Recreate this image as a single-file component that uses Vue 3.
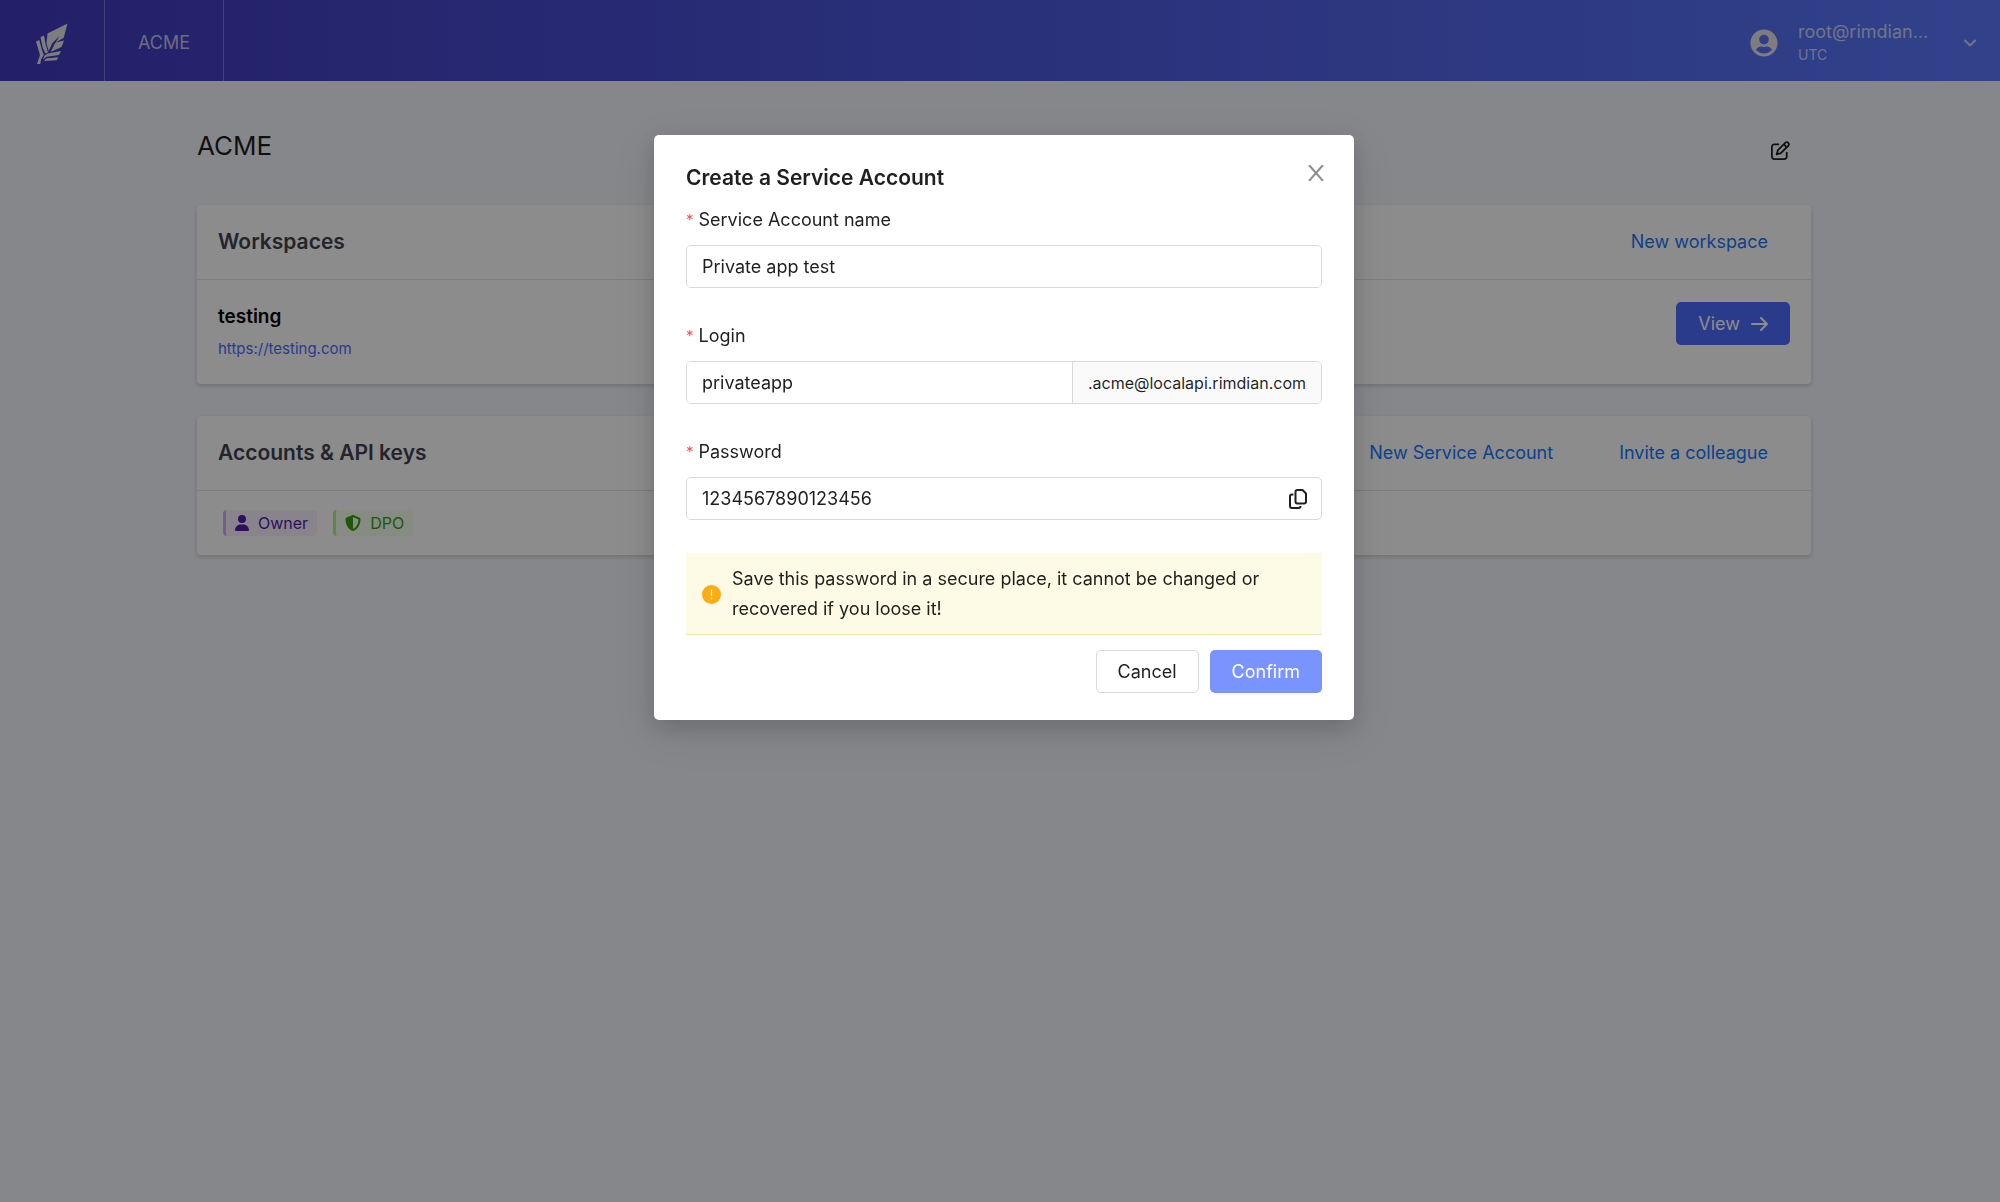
<template>
  <div class="page">
    <header class="topbar">
      <a href="#" class="topbar-logo" aria-label="Home">
        <svg viewBox="0 0 32 42" width="32" height="42" fill="currentColor">
          <path d="M31.5 .5L27.800 14.800 19.500 19.500 28 17.500 25.500 24 14.500 29 19 20.500 23.500 13 16.500 20 12.600 28 10.500 20.500 11.500 10.500z" />
          <path d="M4.500 14L8 12.500 9.500 21 12 29.500 9.500 30.500 6.800 25z" />
          <path d="M0 18.500L3.200 17 6 27 7.800 32 5.200 36 4.200 41 1 41 4 32z" />
          <path d="M12 30.500L25 28 23 32 10.500 33.800 7 36.500 8.500 32.500z" />
          <path d="M10 35.500L22.500 34.200 20.500 37.300 8 38z" />
        </svg>
      </a>
      <a href="#" class="topbar-org">ACME</a>
      <button type="button" class="topbar-user">
        <svg class="avatar" viewBox="0 0 496 512" width="28" height="28" fill="currentColor">
          <path d="M248 8C111 8 0 119 0 256s111 248 248 248 248-111 248-248S385 8 248 8zm0 96c48.600 0 88 39.400 88 88s-39.400 88-88 88-88-39.400-88-88 39.400-88 88-88zm0 344c-58.700 0-111.300-26.600-146.500-68.200 18.800-35.400 55.600-59.800 98.500-59.800 2.400 0 4.800.4 7.100 1.100 13 4.200 26.600 6.900 40.900 6.900 14.300 0 28-2.700 40.900-6.900 2.300-.7 4.700-1.100 7.100-1.100 42.900 0 79.700 24.400 98.500 59.800C359.300 421.400 306.700 448 248 448z" />
        </svg>
        <span class="user-text">
          <span class="user-email">root@rimdian...</span>
          <span class="user-zone">UTC</span>
        </span>
        <svg viewBox="0 0 12 8" width="12" height="8" fill="none" stroke="currentColor" stroke-width="2" stroke-linecap="round" stroke-linejoin="round">
          <path d="M1 1.500l5 5 5-5" />
        </svg>
      </button>
    </header>

    <main class="content">
      <div class="title-row">
        <h1>ACME</h1>
        <button type="button" class="icon-btn" aria-label="Edit organization">
          <svg viewBox="0 0 512 512" width="19" height="19" fill="currentColor">
            <path d="M441 58.9L453.1 71c9.4 9.4 9.4 24.6 0 33.9L424 134.100 377.900 88 407 58.900c9.400-9.400 24.600-9.400 33.900 0zM209.800 256.200L344 121.900 390.100 168 255.800 302.200c-2.900 2.900-6.500 5-10.400 6.100l-58.500 16.700 16.700-58.500c1.100-3.900 3.200-7.500 6.100-10.400zM373.100 25L175.800 222.200c-8.700 8.700-15 19.400-18.300 31.100l-28.600 100c-2.400 8.400-.1 17.400 6.100 23.600s15.200 8.500 23.600 6.100l100-28.600c11.800-3.400 22.500-9.700 31.100-18.300L487 138.900c28.100-28.100 28.100-73.700 0-101.800L474.900 25C446.800-3.100 401.200-3.100 373.100 25zM88 64C39.400 64 0 103.400 0 152V424c0 48.600 39.400 88 88 88H360c48.600 0 88-39.400 88-88V312c0-13.300-10.700-24-24-24s-24 10.700-24 24V424c0 22.100-17.900 40-40 40H88c-22.100 0-40-17.900-40-40V152c0-22.100 17.900-40 40-40H200c13.300 0 24-10.700 24-24s-10.700-24-24-24H88z" />
          </svg>
        </button>
      </div>

      <section class="card">
        <div class="card-head">
          <h2>Workspaces</h2>
          <div class="card-actions">
            <button type="button" class="btn btn-link">New workspace</button>
          </div>
        </div>
        <div v-for="w in workspaces" :key="w.name" class="workspace">
          <div>
            <div class="workspace-name">{{ w.name }}</div>
            <a class="workspace-url" :href="w.url">{{ w.url }}</a>
          </div>
          <button type="button" class="btn btn-primary">
            View
            <svg viewBox="0 0 17 16" width="17" height="16" fill="none" stroke="currentColor" stroke-width="2" stroke-linecap="round" stroke-linejoin="round">
              <path d="M1 8h15M10 2l6 6-6 6" />
            </svg>
          </button>
        </div>
      </section>

      <section class="card">
        <div class="card-head">
          <h2>Accounts &amp; API keys</h2>
          <div class="card-actions">
            <button type="button" class="btn btn-link">New Service Account</button>
            <button type="button" class="btn btn-link">Invite a colleague</button>
          </div>
        </div>
        <div class="tags">
          <span class="tag tag-purple">
            <svg viewBox="0 0 448 512" width="14" height="16" fill="currentColor">
              <path d="M224 256A128 128 0 1 0 224 0a128 128 0 1 0 0 256zm-45.700 48C79.800 304 0 383.800 0 482.300C0 498.700 13.300 512 29.700 512H418.300c16.400 0 29.700-13.300 29.700-29.700C448 383.800 368.200 304 269.700 304H178.300z" />
            </svg>
            Owner
          </span>
          <span class="tag tag-green">
            <svg viewBox="0 0 512 512" width="16" height="16" fill="currentColor">
              <path d="M256 0c4.600 0 9.200 1 13.400 2.900L457.700 82.800c22 9.300 38.400 31 38.300 57.200c-.5 99.200-41.300 280.700-213.600 363.200c-16.700 8-36.100 8-52.800 0C57.300 420.700 16.500 239.200 16 140c-.1-26.200 16.300-47.900 38.300-57.200L242.700 2.900C246.800 1 251.400 0 256 0zm0 66.800V444.800C394 378 431.100 230.100 432 141.400L256 66.800z" />
            </svg>
            DPO
          </span>
        </div>
      </section>
    </main>

    <div v-if="open" class="modal-mask">
      <form class="modal" role="dialog" aria-labelledby="modal-title" @submit.prevent="close">
        <button type="button" class="modal-close" aria-label="Close" @click="close">
          <svg viewBox="0 0 16 16" width="16" height="16" fill="none" stroke="currentColor" stroke-width="2">
            <path d="M1 0l14 16M15 0L1 16" />
          </svg>
        </button>
        <h3 id="modal-title" class="modal-title">Create a Service Account</h3>

        <div class="field">
          <label for="name">Service Account name</label>
          <div class="control">
            <input id="name" v-model="form.name" type="text" />
          </div>
        </div>

        <div class="field">
          <label for="login">Login</label>
          <div class="control">
            <input id="login" v-model="form.login" type="text" />
            <span class="addon">.acme@localapi.rimdian.com</span>
          </div>
        </div>

        <div class="field">
          <label for="password">Password</label>
          <div class="control">
            <input id="password" v-model="form.password" type="text" />
            <button type="button" class="copy-btn" aria-label="Copy password">
              <svg viewBox="0 0 18 20" width="18" height="20" fill="none" stroke="currentColor" stroke-width="2" stroke-linejoin="round">
                <path d="M8.500 1h5l3.500 3.500v8a2 2 0 0 1-2 2H8.500a2 2 0 0 1-2-2V3a2 2 0 0 1 2-2z" />
                <path d="M4.500 5.500H3a2 2 0 0 0-2 2V17a2 2 0 0 0 2 2h6.500a2 2 0 0 0 2-2" />
              </svg>
            </button>
          </div>
        </div>

        <div class="alert" role="alert">
          <svg viewBox="0 0 19 19" width="19" height="19">
            <circle cx="9.500" cy="9.500" r="9.500" fill="#faad14" />
            <path d="M9.500 4.500v6.500M9.500 12.800v1.500" stroke="#fff" stroke-width="1.200" />
          </svg>
          <p>Save this password in a secure place, it cannot be changed or recovered if you loose it!</p>
        </div>

        <div class="modal-footer">
          <button type="button" class="btn btn-default" @click="close">Cancel</button>
          <button type="submit" class="btn btn-confirm">Confirm</button>
        </div>
      </form>
    </div>
  </div>
</template>

<script setup>
import { reactive, ref } from 'vue'

const open = ref(true)

const workspaces = [{ name: 'testing', url: 'https://testing.com' }]

const form = reactive({
  name: 'Private app test',
  login: 'privateapp',
  password: '1234567890123456',
})

const close = () => {
  open.value = false
}
</script>

<style>
body {
  background: #f3f6fc;
}
</style>

<style scoped>
.page {
  min-height: 100vh;
  background: #f3f6fc;
  color: rgba(0, 0, 0, 0.88);
  font-family: Inter, 'Liberation Sans', sans-serif;
  font-size: 18px;
  line-height: 30px;
}

.page *,
.page *::before {
  box-sizing: border-box;
}

button,
input {
  font: inherit;
  color: inherit;
}

button {
  cursor: pointer;
}

a {
  text-decoration: none;
}

svg {
  display: block;
  flex-shrink: 0;
}

.topbar {
  display: flex;
  height: 81px;
  background: linear-gradient(90deg, #403abe, #5978fd);
  color: rgba(255, 255, 255, 0.7);
}

.topbar-logo,
.topbar-org {
  display: flex;
  align-items: center;
  border-right: 1px solid rgba(255, 255, 255, 0.3);
  color: inherit;
}

.topbar-logo {
  padding: 6px 36px 0;
  color: #e4e4e4;
}

.topbar-org {
  padding: 5px 33px 0;
}

.topbar-user {
  display: flex;
  align-items: center;
  gap: 20px;
  margin-left: auto;
  padding: 5px 24px 0 0;
  border: none;
  background: none;
  text-align: left;
}

.avatar {
  color: #e4e4e4;
}

.user-text {
  width: 146px;
}

.user-email,
.user-zone {
  display: block;
  white-space: nowrap;
}

.user-email {
  line-height: 24px;
}

.user-zone {
  font-size: 14px;
  line-height: 22px;
}

.content {
  max-width: 1622px;
  margin: 0 auto;
  padding: 41px 0 41px 8px;
}

.title-row {
  display: flex;
  align-items: center;
  justify-content: space-between;
  height: 48px;
  margin-bottom: 35px;
}

h1 {
  margin: 0;
  font-size: 26px;
  font-weight: 400;
}

.icon-btn {
  padding: 8px 21px 0;
  border: none;
  background: none;
}

.card {
  margin-bottom: 32px;
  border-radius: 4px;
  background: #fff;
  box-shadow: 0 2px 4px rgba(0, 0, 0, 0.16);
}

.card-head {
  display: flex;
  align-items: center;
  justify-content: space-between;
  height: 75px;
  padding: 0 21px;
  border-bottom: 1px solid #e4e4e8;
}

.card-head h2 {
  margin: 0;
  color: #434350;
  font-size: 21px;
  font-weight: 600;
}

.card-actions {
  display: flex;
  gap: 22px;
}

.btn {
  display: flex;
  align-items: center;
  gap: 11px;
  height: 43px;
  padding: 0 21px;
  border: 1px solid transparent;
  border-radius: 5px;
}

.btn-link {
  background: none;
  color: #1677ff;
}

.btn-primary {
  background: #4e6cff;
  color: #fff;
}

.btn-default {
  border-color: #d9d9d9;
  background: #fff;
}

.btn-confirm {
  background: #7a94ff;
  color: #fff;
}

.workspace {
  display: flex;
  align-items: flex-start;
  justify-content: space-between;
  padding: 22px 21px;
}

.workspace-name {
  margin-bottom: 4px;
  color: #000;
  font-size: 19px;
  font-weight: 600;
}

.workspace-url {
  display: block;
  color: #4e6cff;
  font-size: 15px;
  line-height: 26px;
}

.tags {
  display: flex;
  gap: 16px;
  padding: 19px 26px;
}

.tag {
  display: flex;
  align-items: center;
  gap: 9px;
  height: 26px;
  padding: 0 9px;
  border-left: 3px solid;
  border-radius: 4px;
  font-size: 16px;
}

.tag-purple {
  border-color: #d3adf7;
  background: #f9f0ff;
  color: #531dab;
}

.tag-green {
  border-color: #b7eb8f;
  background: #f6ffed;
  color: #389e0d;
}

.modal-mask {
  position: fixed;
  inset: 0;
  padding: 135px 0 32px 8px;
  background: rgba(0, 0, 0, 0.45);
}

.modal {
  position: relative;
  max-width: 700px;
  margin: 0 auto;
  padding: 27px 32px;
  border-radius: 5px;
  background: #fff;
  box-shadow: 0 8px 24px rgba(0, 0, 0, 0.16), 0 12px 48px 12px rgba(0, 0, 0, 0.06);
}

.modal-close {
  position: absolute;
  top: 22px;
  right: 22px;
  padding: 8px;
  border: none;
  background: none;
  color: #8c8c8c;
}

.modal-title {
  margin: 0 0 11px;
  font-size: 21px;
  font-weight: 600;
  line-height: 32px;
}

.field {
  margin-bottom: 33px;
}

.field label {
  display: flex;
  margin-bottom: 10px;
}

.field label::before {
  content: '*';
  margin-right: 5px;
  color: #ff4d4f;
  font-size: 15px;
}

.control {
  display: flex;
  height: 43px;
  border: 1px solid #d9d9d9;
  border-radius: 5px;
  overflow: hidden;
}

.control input {
  flex: 1;
  min-width: 0;
  padding: 0 15px;
  border: none;
  outline: none;
  background: #fff;
}

.addon {
  display: flex;
  align-items: center;
  padding: 0 15px;
  border-left: 1px solid #d9d9d9;
  background: #fafafa;
  font-size: 16px;
}

.copy-btn {
  padding: 0 14px;
  border: none;
  background: none;
}

.alert {
  display: flex;
  align-items: center;
  gap: 11px;
  margin-bottom: 15px;
  padding: 11px 16px;
  background: #fdfbe5;
  box-shadow: inset 0 -1px #ede4b4;
}

.alert p {
  margin: 0;
}

.modal-footer {
  display: flex;
  justify-content: flex-end;
  gap: 11px;
}
</style>
